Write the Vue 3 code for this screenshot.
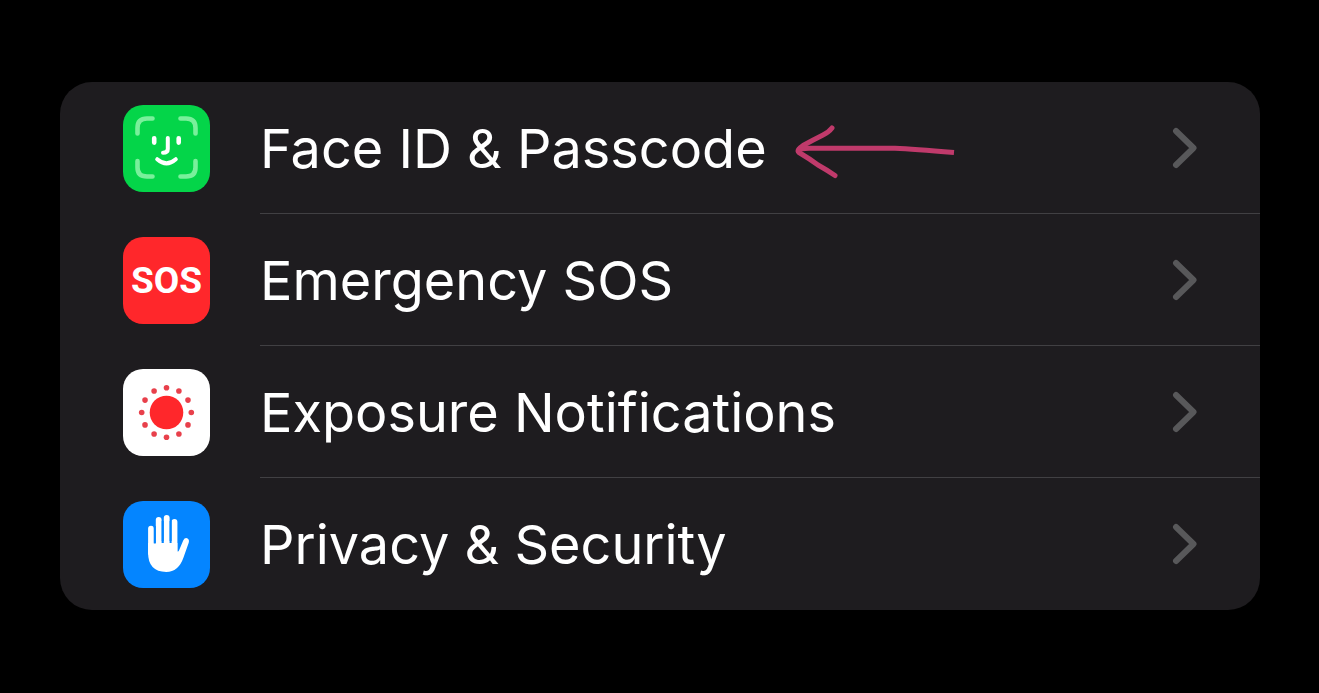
<script setup>
const rows = [
  { id: 'face', label: 'Face ID & Passcode', marked: true },
  { id: 'sos', label: 'Emergency SOS' },
  { id: 'exposure', label: 'Exposure Notifications' },
  { id: 'privacy', label: 'Privacy & Security' },
]

const dots = Array.from({ length: 12 }, (_, i) => {
  const a = (i * Math.PI) / 6
  return { x: 43.5 + 24.8 * Math.cos(a), y: 43.5 + 24.8 * Math.sin(a) }
})
</script>

<template>
  <main class="page">
    <nav class="card" aria-label="Settings">
      <a v-for="row in rows" :key="row.id" class="row" href="#">
        <span class="icon" :class="row.id">
          <svg v-if="row.id === 'face'" viewBox="0 0 87 87" fill="none" stroke-linecap="round" stroke-linejoin="round" aria-hidden="true">
            <g stroke="#79f09b" stroke-width="4.6">
              <path d="M14.5 28.5V23Q14.5 13.5 24 13.5H29.5" />
              <path d="M57.5 13.5H63Q72.5 13.5 72.5 23V28.5" />
              <path d="M14.5 56V62.5Q14.5 71.5 24 71.5H29.5" />
              <path d="M57.5 71.5H63Q72.5 71.5 72.5 62.5V56" />
            </g>
            <g stroke="#fff" stroke-width="4.6">
              <path d="M31.2 33.2V37.6M55.7 33.2V37.6" />
              <path d="M44.8 33V44Q44.8 47.8 40 47.8" stroke-width="4" />
              <path d="M34.2 54.2Q43.5 62.4 52.8 54.2" stroke-width="4" />
            </g>
          </svg>
          <span v-else-if="row.id === 'sos'" class="sos-text">SOS</span>
          <svg v-else-if="row.id === 'exposure'" viewBox="0 0 87 87" aria-hidden="true">
            <circle cx="43.5" cy="43.5" r="16.8" fill="#ff272b" />
            <circle v-for="(d, i) in dots" :key="i" :cx="d.x" :cy="d.y" r="2.8" fill="#e8404b" />
          </svg>
          <svg v-else viewBox="0 0 87 87" aria-hidden="true">
            <g stroke="#fff" stroke-width="5.8" stroke-linecap="round" fill="none">
              <path d="M28 27.6V52M35.7 18.8V48M43.7 16.8V48M51.5 20.8V50" />
            </g>
            <path d="M25.1 42H54.4V50.2Q55.2 51.2 56.2 49L60.2 39.5Q61.8 36.3 64.6 37.4Q66.6 38.6 65.7 41.7L60.5 56.5Q55.5 71 43.2 71Q25.1 70.5 25.1 52Z" fill="#fff" />
            <path d="M31.8 25V42.5M39.7 20V40M47.6 20V40" stroke="#0485ff" stroke-width="2" fill="none" />
          </svg>
        </span>
        <span class="body">
          <span class="label">{{ row.label }}</span>
          <svg v-if="row.marked" class="arrow" viewBox="0 -8 162 64" fill="none" stroke="#c03a6b" stroke-width="5" stroke-linejoin="round" aria-hidden="true">
            <path d="M39 4Q36 8 30 11Q20 16 10 21.5Q3 26 6 28.5Q17 35 25 41Q34 46 42 51.5" stroke-linecap="round" />
            <path d="M5 26Q8 24.5 16 24.2H102Q120 25 161 28.5" />
          </svg>
          <svg class="chevron" viewBox="0 0 26 42" fill="none" stroke="#58585a" stroke-width="6" stroke-linecap="round" stroke-linejoin="round" aria-hidden="true">
            <path d="M4 4L21.5 21L4 38" />
          </svg>
        </span>
      </a>
    </nav>
  </main>
</template>

<style>
body {
  margin: 0;
  background: #000;
}
</style>

<style scoped>
.page {
  padding: 82px 59px 82px 60px;
}
.card {
  overflow: hidden;
  border-radius: 32px;
  background: #1e1c1f;
  font-family: Inter, "Liberation Sans", sans-serif;
}
.row {
  display: flex;
  align-items: center;
  padding-left: 63px;
  color: #fff;
  text-decoration: none;
}
.icon {
  display: flex;
  flex: none;
  align-items: center;
  justify-content: center;
  width: 87px;
  height: 87px;
  border-radius: 20px;
}
.icon svg {
  width: 100%;
  height: 100%;
}
.face {
  background: #04d549;
}
.sos {
  background: #ff272b;
}
.exposure {
  background: #fff;
}
.privacy {
  background: #0485ff;
}
.sos-text {
  padding-top: 2px;
  font: 700 37px/40px Roboto, "Liberation Sans", sans-serif;
}
.body {
  display: flex;
  flex: 1;
  align-items: center;
  box-sizing: border-box;
  height: 132px;
  margin-left: 50px;
  padding-right: 62px;
  border-bottom: 1px solid #414043;
}
.row:last-child .body {
  border-bottom-color: transparent;
}
.label {
  padding-top: 2px;
  font-size: 54px;
  line-height: 68px;
  white-space: nowrap;
}
.arrow {
  flex: none;
  width: 162px;
  height: 64px;
  margin-left: 26px;
}
.chevron {
  flex: none;
  width: 26px;
  height: 42px;
  margin-left: auto;
}
</style>
